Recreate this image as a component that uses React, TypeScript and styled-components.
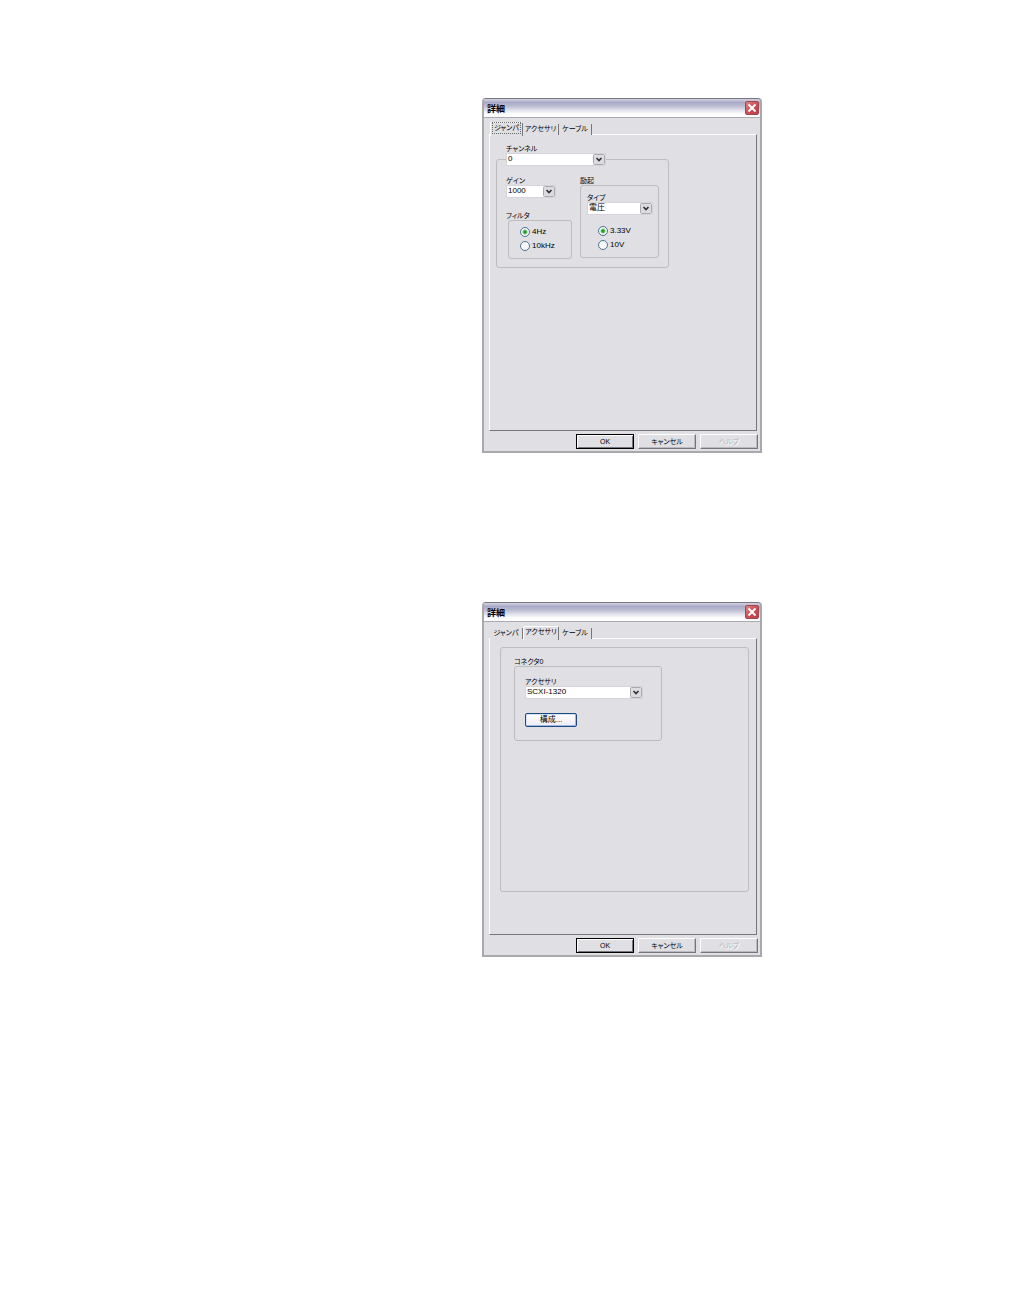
import React, { useId } from "react";
import styled, { createGlobalStyle, css } from "styled-components";

const face = "#e0dfe3";
const line = "#bdbcc1";
const shade = "#77767b";

const GlobalStyle = createGlobalStyle`
  body {
    margin: 0;
    background: #fff;
  }
  *, *::before, *::after {
    box-sizing: border-box;
  }
`;

const Page = styled.main`
  display: flex;
  flex-direction: column;
  gap: 149px;
  padding: 98px 0 98px 482px;
  color: #000;
  font-family: "Liberation Sans", "Noto Sans CJK JP", sans-serif;
  font-size: 8px;
  line-height: 10px;
  font-feature-settings: "palt";
`;

const Window = styled.section`
  width: 280px;
  max-width: 100%;
  background: ${face};
  border: 2px solid #a9a8ad;
  border-top: 1px solid #77777d;
  border-radius: 4px 4px 0 0;
`;

const TitleBar = styled.header`
  display: flex;
  align-items: center;
  justify-content: space-between;
  height: 19px;
  padding: 0 1px 0 3px;
  border-bottom: 1px solid #a9a9b2;
  border-radius: 3px 3px 0 0;
  background: linear-gradient(#d4d5e2 0%, #a9aac8 18%, #b9bad2 38%, #e6e6ef 65%, #fff 85%);
`;

const Title = styled.h2`
  margin: 0;
  padding-top: 2px;
  font-size: 9px;
  line-height: 12px;
  font-weight: 700;
`;

const CloseButton = styled.button`
  display: grid;
  place-items: center;
  width: 14px;
  height: 14px;
  padding: 0;
  border: 1px solid #a8434c;
  border-radius: 2px;
  background: linear-gradient(135deg, #dd858b, #c94d55 55%, #b5404a);
`;

const TabList = styled.div`
  display: flex;
  align-items: flex-end;
  height: 17px;
  padding: 3px 0 0 6px;
`;

const Tab = styled.button<{ $active: boolean; $width: number }>`
  display: grid;
  place-items: center;
  width: ${(p) => p.$width}px;
  height: 11px;
  padding: 0 0 1px;
  border: 0;
  border-right: 1px solid ${shade};
  background: ${face};
  color: inherit;
  font: inherit;
  font-size: 7px;
  font-feature-settings: inherit;
  white-space: nowrap;
  ${(p) =>
    p.$active &&
    css`
      z-index: 1;
      height: 14px;
      margin-bottom: -1px;
      padding-bottom: 3px;
      border-top: 1px solid #fff;
      border-left: 1px solid #fff;
      border-radius: 2px 2px 0 0;
    `}
`;

const TabText = styled.span<{ $focused: boolean }>`
  padding: 0 1px;
  outline: ${(p) => (p.$focused ? "1px dotted #666" : "none")};
`;

const Panel = styled.div`
  min-height: 297px;
  margin: -1px 3px 0 5px;
  border: 1px solid #fff;
  border-right-color: ${shade};
  border-bottom-color: ${shade};
`;

const Footer = styled.footer`
  display: flex;
  justify-content: flex-end;
  gap: 4px;
  padding: 3px 2px 2px;
`;

const DialogButton = styled.button<{ $primary?: boolean }>`
  width: 58px;
  height: 15px;
  padding: 0;
  border: 1px solid #fff;
  border-right-color: ${shade};
  border-bottom-color: ${shade};
  box-shadow: inset -1px -1px #bbbabf;
  background: ${face};
  color: inherit;
  font: inherit;
  font-size: 7px;
  font-feature-settings: inherit;
  ${(p) =>
    p.$primary &&
    css`
      border-color: #000;
      box-shadow: inset 1px 1px #fff, inset -1px -1px #77767b;
    `}
  &:disabled {
    color: #b5b4b9;
    text-shadow: 1px 1px #fff;
  }
`;

const Group = styled.div<{ $width: number }>`
  width: ${(p) => p.$width}px;
  border: 1px solid ${line};
  border-radius: 3px;
`;

const ChannelGroup = styled(Group)`
  margin: 24px 0 0 6px;
  padding: 0 9px 8px;
`;

const ChannelField = styled.div`
  margin-top: -16px;
`;

const Columns = styled.div`
  display: flex;
  justify-content: space-between;
  margin-top: 10px;
`;

const Column = styled.div`
  display: flex;
  flex-direction: column;
`;

const Caption = styled.div`
  font-size: 7px;
  line-height: 9px;
`;

const FilterBlock = styled.div`
  margin-top: 13px;
`;

const FilterGroup = styled(Group)`
  margin-left: 2px;
  padding: 4px 0 5px 11px;
`;

const ExcitationGroup = styled(Group)`
  padding: 7px 0 5px 6px;
`;

const ExcitationChoices = styled.div`
  margin: 9px 0 0 11px;
`;

const AccessoryPanel = styled(Group)`
  width: auto;
  min-height: 245px;
  margin: 8px 7px 0 10px;
  padding: 9px 13px;
`;

const ConnectorGroup = styled(Group)`
  padding: 10px 10px 13px;
`;

const FieldLabel = styled.label`
  display: block;
  font-size: 7px;
  line-height: 9px;
`;

const ComboBox = styled.div<{ $width: number }>`
  display: grid;
  width: ${(p) => p.$width}px;
  height: 13px;
  background: #fff;
  border: 1px solid #d5d4da;

  > * {
    grid-area: 1 / 1;
  }
`;

const Select = styled.select`
  appearance: none;
  width: 100%;
  height: 11px;
  padding: 0 14px 2px 1px;
  border: 0;
  background: transparent;
  color: inherit;
  font: inherit;
  line-height: 9px;
`;

const Arrow = styled.svg`
  justify-self: end;
  pointer-events: none;
`;

const RadioLabel = styled.label`
  display: flex;
  align-items: center;
  gap: 2px;
  height: 14px;
`;

const RadioInput = styled.input`
  appearance: none;
  width: 10px;
  height: 10px;
  margin: 0;
  border: 1px solid #4a7394;
  border-radius: 50%;
  background: #f8f8f8;

  &:checked {
    background: radial-gradient(circle, #21a121 0 1px, #74c774 2px, #f8f8f8 3px);
  }
`;

const ConfigureButton = styled.button`
  display: block;
  width: 52px;
  height: 14px;
  margin-top: 14px;
  padding: 0;
  border: 1px solid #1f4a80;
  border-radius: 2px;
  box-shadow: inset -1px -1px #9fb7e4, inset 1px 1px #d7e2f7;
  background: linear-gradient(#fff, #edecf2);
  color: inherit;
  font: inherit;
`;

function Combo({ label, value, width }: { label: string; value: string; width: number }) {
  const id = useId();
  return (
    <>
      <FieldLabel htmlFor={id}>{label}</FieldLabel>
      <ComboBox $width={width}>
        <Select id={id} defaultValue={value}>
          <option>{value}</option>
        </Select>
        <Arrow width="12" height="11" viewBox="0 0 12 11" aria-hidden="true">
          <rect x="0.5" y="0.5" width="11" height="10" rx="1" fill="#dcdce0" stroke="#a9a9b0" />
          <path d="M3.5 4 6 6.5 8.5 4" fill="none" stroke="#333" strokeWidth="1.7" />
        </Arrow>
      </ComboBox>
    </>
  );
}

function Radios({ name, options }: { name: string; options: string[] }) {
  return (
    <>
      {options.map((option, i) => (
        <RadioLabel key={option}>
          <RadioInput type="radio" name={name} defaultChecked={i === 0} />
          {option}
        </RadioLabel>
      ))}
    </>
  );
}

const tabs = [
  { label: "ジャンパ", width: 33 },
  { label: "アクセサリ", width: 36 },
  { label: "ケーブル", width: 33 },
];

function Dialog({
  active,
  focused = false,
  children,
}: {
  active: number;
  focused?: boolean;
  children: React.ReactNode;
}) {
  return (
    <Window role="dialog" aria-label="詳細">
      <TitleBar>
        <Title>詳細</Title>
        <CloseButton type="button" aria-label="閉じる">
          <svg width="10" height="10" viewBox="0 0 10 10" aria-hidden="true">
            <path d="M1.5 1.5 8.5 8.5M8.5 1.5 1.5 8.5" stroke="#fff" strokeWidth="1.8" />
          </svg>
        </CloseButton>
      </TitleBar>
      <TabList role="tablist">
        {tabs.map((tab, i) => (
          <Tab
            key={tab.label}
            type="button"
            role="tab"
            aria-selected={i === active}
            $active={i === active}
            $width={tab.width}
          >
            <TabText $focused={focused && i === active}>{tab.label}</TabText>
          </Tab>
        ))}
      </TabList>
      <Panel role="tabpanel">{children}</Panel>
      <Footer>
        <DialogButton type="button" $primary>
          OK
        </DialogButton>
        <DialogButton type="button">キャンセル</DialogButton>
        <DialogButton type="button" disabled>
          ヘルプ
        </DialogButton>
      </Footer>
    </Window>
  );
}

export default function App() {
  return (
    <>
      <GlobalStyle />
      <Page lang="ja">
        <Dialog active={0} focused>
          <ChannelGroup $width={173}>
            <ChannelField>
              <Combo label="チャンネル" value="0" width={100} />
            </ChannelField>
            <Columns>
              <Column>
                <Combo label="ゲイン" value="1000" width={50} />
                <FilterBlock>
                  <Caption id="filter">フィルタ</Caption>
                  <FilterGroup $width={64} role="radiogroup" aria-labelledby="filter">
                    <Radios name="filter" options={["4Hz", "10kHz"]} />
                  </FilterGroup>
                </FilterBlock>
              </Column>
              <Column>
                <Caption id="excitation">励起</Caption>
                <ExcitationGroup $width={79} role="group" aria-labelledby="excitation">
                  <Combo label="タイプ" value="電圧" width={66} />
                  <ExcitationChoices>
                    <Radios name="excitation" options={["3.33V", "10V"]} />
                  </ExcitationChoices>
                </ExcitationGroup>
              </Column>
            </Columns>
          </ChannelGroup>
        </Dialog>
        <Dialog active={1}>
          <AccessoryPanel $width={249}>
            <Caption id="connector">コネクタ0</Caption>
            <ConnectorGroup $width={148} role="group" aria-labelledby="connector">
              <Combo label="アクセサリ" value="SCXI-1320" width={118} />
              <ConfigureButton type="button">構成...</ConfigureButton>
            </ConnectorGroup>
          </AccessoryPanel>
        </Dialog>
      </Page>
    </>
  );
}
